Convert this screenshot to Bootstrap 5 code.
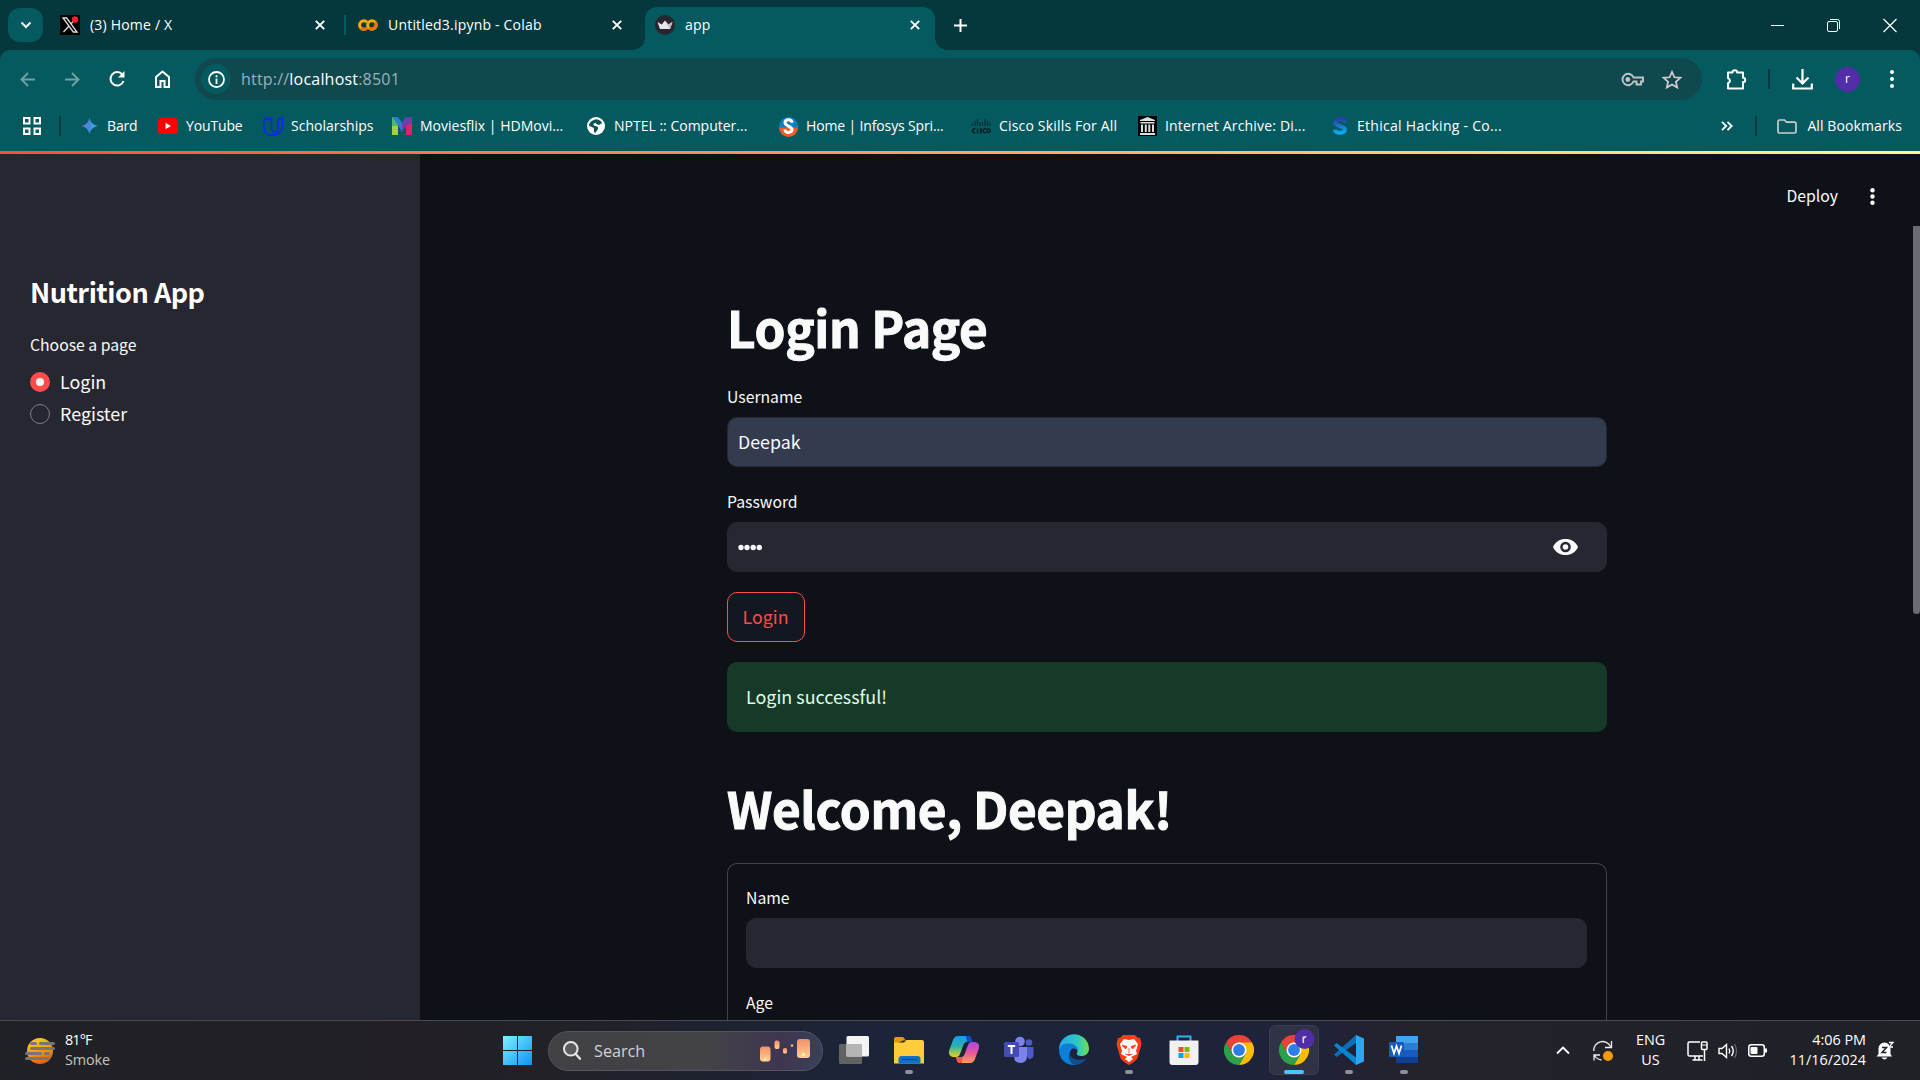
<!DOCTYPE html>
<html lang="en" data-bs-theme="dark">
<head>
<meta charset="utf-8">
<title>app</title>
<link href="https://cdn.jsdelivr.net/npm/bootstrap@5.3.0/dist/css/bootstrap.min.css" rel="stylesheet">
<script src="https://cdn.jsdelivr.net/npm/bootstrap@5.3.0/dist/js/bootstrap.bundle.min.js"></script>
<style>
body{width:1920px;height:1080px;overflow:hidden;background:#0e1117;color:#fff;font-family:"Open Sans","Noto Sans",sans-serif;font-size:14px;line-height:20px}
svg{display:block;flex:none;overflow:visible}
.t{white-space:nowrap}
.slot{flex:none;display:flex;align-items:center}
/* browser chrome */
.strip{height:50px;background:#04383d}
.tabsearch{width:35px;height:34px;margin:8px 0 0 8px;border-radius:12px;background:#055a60}
.btab{height:50px;color:#fff;position:relative}
.btab .t{margin-left:10px;letter-spacing:.2px}
.btab .x{margin-left:auto}
.tab-a{width:265px;margin-left:17px;margin-right:19px}
.tab-b{width:264px;margin-left:12px}
.active-tab{width:290px;height:43px;margin:7px 0 0 23px;padding:0 15px 7px 10px;background:#055a60;border-radius:12px 12px 0 0}
.active-tab::before,.active-tab::after{content:"";position:absolute;bottom:0;width:12px;height:12px}
.active-tab::before{left:-12px;background:radial-gradient(circle at 0 0,transparent 11.5px,#055a60 12px)}
.active-tab::after{right:-12px;background:radial-gradient(circle at 100% 0,transparent 11.5px,#055a60 12px)}
.newtab{margin-left:19px}
.winctl{gap:43px;padding-right:23px}
.vsep{width:2px;height:20px;flex:none;background:#055a60}
.vsep.dk{background:#04383d}
.toolbox{height:101px;background:#055a60;border-radius:10px 10px 0 0}
.stripbg{background:#04383d}
.toolrow{height:58px}
.omni{width:1507px;height:42px;border-radius:21px;background:#0f484e;font-size:16px;margin-left:25px}
.omni .t{margin-left:10px;letter-spacing:.2px}
.omni .chip{width:30px;height:30px;border-radius:50%;background:#055a60;margin-left:6px}
.omni .dim{color:#9cb3b5}
.avatar{width:25px;height:25px;border-radius:50%;background:#512da8;font-size:12px;line-height:24px;text-align:center}
.bmrow{height:36px}
.bmrow .t{position:relative;top:-.5px}
.bm{flex:none;display:flex;align-items:center}
.bm svg{margin-right:8px}
.ls-w{letter-spacing:.18px}
.ls-x{letter-spacing:.28px}
.ls-n{letter-spacing:-.14px}
/* application */
.viewport-box{height:869px;font-family:"Noto Sans CJK SC","Noto Sans",sans-serif;color:#fafafa}
.rainbow{left:0;top:0;width:1920px;height:3px;background:linear-gradient(90deg,#ff4b4b,#fffd80)}
.side{width:420px;background:#262730;padding:123px 30px 0}
.side h2{font-size:27px;line-height:36px;font-weight:700;margin:0 0 22px;letter-spacing:-.48px}
.lbl{font-size:15.75px;line-height:26px;display:block}
.opt{height:26px;font-size:17.9px;margin-top:11px}
.opt+.opt{margin-top:6px}
.opt .t{padding-bottom:2px}
.rad{width:20px;height:20px;border-radius:50%;border:1px solid #7d7e86;margin-right:10px}
.rad.on{border:6px solid #ff4b4b;background:#f4f4f4}
.mainpane{padding:143px 313px 0 307px;overflow:hidden}
.mainpane h1{font-size:49.5px;line-height:66px;font-weight:700;margin:0 0 24px;letter-spacing:-.35px;color:#fafafa;-webkit-text-stroke:1px #fafafa}
.fld{height:50px;border-radius:10px;border:1px solid #262730;background:#262730;margin-top:7px;padding:0 11px 2px 10px;font-size:17.8px;color:#fafafa}
.fld.filled{background:#333b4f}
.loginbtn{width:78px;height:50px;border:1px solid #ff4b4b!important;border-radius:10px;background:#131720;color:#ff4b4b;font-size:17.8px;padding:0 1px 2px 0;margin-top:20px}
.okbox{height:70px;border:0;border-radius:10px;background:#173928;color:#dffde9;font-size:17.9px;padding:0 19px 2px;margin:20px 0 0}
.mainpane h1.welcome{margin:43px 0 22px}
.formbox{border:1px solid #41444c;border-radius:10px 10px 0 0;border-bottom:0;height:180px;padding:21px 19px 0 18px}
.g21{margin-top:22px}
.eye{margin:1px 17px 0 0}
.dots{margin-top:2px}
.deploy{right:45px;top:34px;font-size:15.75px;line-height:22px}
.thumb{right:0;top:75px;width:7px;height:388px;background:#6b6b70;border-radius:0 0 4px 4px}
/* taskbar */
.task{height:60px;border-top:1px solid #494b50;background:linear-gradient(90deg,#202126 0,#222026 22%,#222127 28%,#1b2438 45%,#1c233a 60%,#20223a 68%,#24222a 74%,#22222b 80%,#1f2127 100%);font-size:14.4px}
.sbox{width:275px;height:40px;border-radius:20px;background:linear-gradient(90deg,#414145,#424247 60%,#403551 85%,#37415a);border:1px solid #55565c;color:#d2d2d5;font-size:16.2px;padding-left:14px}
.app{width:55px;height:50px;flex:none;display:flex;justify-content:center;position:relative;padding-top:10px}
.app.run::after{content:"";position:absolute;bottom:1px;width:8px;height:4px;border-radius:2px;background:#8d9098}
.app.now::before{content:"";position:absolute;left:2px;top:0;width:50px;height:50px;border-radius:6px;background:#2f3345;border:1px solid #393d4c}
.app.run.now::after{width:20px;background:#4cc2ff}
.app.now svg{position:relative}
.apps{margin:4px 0 0 3.5px}
.two{line-height:20px;padding-bottom:2px}
.weather{width:478px;padding-left:25px}
.weather .two{margin-left:10px}
.deg{letter-spacing:-.9px}
.smoke{color:#c4c5c7;letter-spacing:-.1px}
.tray{width:365px}
</style>
</head>
<body class="d-flex flex-column">
<svg width="0" height="0" class="position-absolute">
<defs>
<symbol id="cls" viewBox="0 0 10 10"><path d="M.8.8l8.4 8.400M9.200.8L.8 9.200" stroke="#fff" stroke-width="1.900"/></symbol>
<symbol id="chr" viewBox="0 0 48 48"><path d="M24 24L3.200 12A24 24 0 0 1 44.800 12Z" fill="#ea4335"/><path d="M44.800 12A24 24 0 0 1 24 48L34.400 30 24 12Z" fill="#fbbc04"/><path d="M3.200 12L13.600 30 24 24V12Z" fill="#ea4335"/><path d="M3.200 12A24 24 0 0 0 24 48L34.400 30 24 24 13.600 30Z" fill="#2da04c"/><circle cx="24" cy="24" r="12" fill="#fff"/><circle cx="24" cy="24" r="9.500" fill="#2f7de9"/></symbol>
</defs>
</svg>

<header>
<div class="strip d-flex">
  <div class="tabsearch d-flex align-items-center justify-content-center"><svg width="12" height="8" viewBox="0 0 12 8"><path d="M1.500 1.500L6 6l4.500-4.500" fill="none" stroke="#fff" stroke-width="2"/></svg></div>
  <div class="btab tab-a d-flex align-items-center">
    <svg width="20" height="20" viewBox="0 0 20 20"><rect width="20" height="20" fill="#000"/><path d="M3 3h3.700L17 17h-3.700zM16 3l-5 5.800M8.800 11.300L3.500 17" fill="none" stroke="#ddd" stroke-width="1.300"/><circle cx="15" cy="4.500" r="3.200" fill="#f4212e"/></svg>
    <span class="t">(3) Home / X</span><svg class="x" width="10" height="10"><use href="#cls"/></svg>
  </div>
  <div class="vsep align-self-center"></div>
  <div class="btab tab-b d-flex align-items-center">
    <svg width="20" height="12" viewBox="0 0 20 12"><circle cx="14" cy="6" r="4.300" fill="none" stroke="#f9ab00" stroke-width="3"/><path d="M9 3.100A4.300 4.300 0 1 0 9 9" fill="none" stroke="#f9ab00" stroke-width="3"/><path d="M11 9a4.300 4.300 0 0 0 6-6M3 9A4.300 4.300 0 0 0 9 9" fill="none" stroke="#e8710a" stroke-width="3"/></svg>
    <span class="t">Untitled3.ipynb - Colab</span><svg class="x" width="10" height="10"><use href="#cls"/></svg>
  </div>
  <div class="btab active-tab d-flex align-items-center">
    <svg width="20" height="20" viewBox="0 0 20 20"><circle cx="10" cy="10" r="10" fill="#262730"/><path d="M2.500 7l4.300 2.400L10 5.500l3.200 3.900L17.500 7 15 14H5z" fill="#e8e8e8"/><path d="M10 5.500l3.200 3.900L17.500 7 15 14z" fill="#bdbdbd"/></svg>
    <span class="t">app</span><svg class="x" width="10" height="10"><use href="#cls"/></svg>
  </div>
  <svg class="newtab align-self-center" width="13" height="13" viewBox="0 0 13 13"><path d="M6.500 0v13M0 6.500h13" stroke="#fff" stroke-width="2"/></svg>
  <div class="winctl ms-auto d-flex align-items-center">
    <svg width="13" height="13"><path d="M0 6.500h13" stroke="#fff"/></svg>
    <svg width="13" height="13" viewBox="0 0 13 13"><rect x=".5" y="2.500" width="10" height="10" rx="1.500" fill="none" stroke="#fff"/><path d="M3 .5h7.500a2 2 0 0 1 2 2V10" fill="none" stroke="#fff"/></svg>
    <svg width="14" height="13" viewBox="0 0 14 13"><path d="M.5 0l13 13M13.500 0L.5 13" stroke="#fff" stroke-width="1.200"/></svg>
  </div>
</div>
<div class="stripbg"><div class="toolbox">
  <div class="toolrow d-flex align-items-center">
    <svg style="margin-left:20px" width="15" height="15" viewBox="0 0 15 15"><path d="M15 7.500H1.500M8 1L1.500 7.500 8 14" fill="none" stroke="#6fa0a4" stroke-width="1.900"/></svg>
    <svg style="margin-left:30px" width="15" height="15" viewBox="0 0 15 15"><path d="M0 7.500h13.500M7 1l6.500 6.500L7 14" fill="none" stroke="#6fa0a4" stroke-width="1.900"/></svg>
    <svg style="margin-left:29px" width="16" height="16" viewBox="0 0 16 16"><path d="M13.300 3.500A6.700 6.700 0 1 0 14.500 10" fill="none" stroke="#fff" stroke-width="2"/><path d="M15.500 0v6.500H9z" fill="#fff"/></svg>
    <svg style="margin-left:30px" width="15" height="18" viewBox="0 0 15 18"><path d="M1 7l6.500-5.500L14 7v10H9.500v-6h-4v6H1z" fill="none" stroke="#fff" stroke-width="2"/></svg>
    <div class="omni d-flex align-items-center">
      <div class="chip d-flex align-items-center justify-content-center"><svg width="17" height="17" viewBox="0 0 17 17"><circle cx="8.500" cy="8.500" r="7.500" fill="none" stroke="#fff" stroke-width="1.800"/><path d="M8.500 7.500V13M8.500 4.200v2" stroke="#fff" stroke-width="1.800"/></svg></div>
      <span class="t dim">http://<span class="text-white">localhost</span>:8501</span>
      <svg class="ms-auto" width="23" height="13" viewBox="0 0 23 13"><path d="M12.500 4.500A5.700 5.700 0 1 0 12.500 8.500H15.500V11.500H20V8.500H22V4.500z" fill="none" stroke="#c0c4c6" stroke-width="1.900"/><circle cx="6.800" cy="6.500" r="2.400" fill="#c0c4c6"/></svg>
      <svg style="margin:0 20px 0 18px" width="20" height="19" viewBox="0 0 20 19"><path d="M10 1.800l2.400 5.500 6 .5-4.500 4 1.300 5.800L10 14.500l-5.200 3.100 1.300-5.800-4.500-4 6-.5z" fill="none" stroke="#d5cfd0" stroke-width="1.700"/></svg>
    </div>
    <svg style="margin-left:24px" width="21" height="21" viewBox="0 0 21 21"><path d="M2 3.500h4.500a2.300 2.300 0 0 1 4.600 0H17v5.200a2.200 2.200 0 0 1 0 4.400V19.500H2v-5.200a2.600 2.600 0 0 0 0-5z" fill="none" stroke="#fff" stroke-width="2" stroke-linejoin="round"/></svg>
    <div class="vsep dk" style="margin-left:21px"></div>
    <svg style="margin-left:22px" width="21" height="21" viewBox="0 0 21 21"><path d="M10.500 0v14M4.500 8.500l6 6 6-6M1.200 14.500v5h18.600v-5" fill="none" stroke="#fff" stroke-width="2.200"/></svg>
    <div class="avatar" style="margin-left:22px">r</div>
    <svg style="margin-left:30px" width="4" height="18" viewBox="0 0 4 18"><g fill="#fff"><circle cx="2" cy="2" r="2"/><circle cx="2" cy="9" r="2"/><circle cx="2" cy="16" r="2"/></g></svg>
  </div>
  <div class="bmrow d-flex align-items-center">
    <svg style="margin-left:23px" width="18" height="18" viewBox="0 0 18 18"><path d="M1 1h5.500v5.500H1zM11.500 1H17v5.500h-5.500zM1 11.500h5.500V17H1zM11.500 11.500H17V17h-5.500z" fill="none" stroke="#fff" stroke-width="2"/></svg>
    <div class="vsep dk" style="margin:0 20px 0 18px"></div>
    <div class="bm" style="width:77px"><svg style="margin-right:9px" width="17" height="16" viewBox="0 0 16 16"><defs><linearGradient id="bg1"><stop stop-color="#8b6fc4"/><stop offset=".5" stop-color="#3f8ce0"/><stop offset="1" stop-color="#4fb5f5"/></linearGradient></defs><path d="M8 0q1.400 6.600 8 8-6.600 1.400-8 8-1.400-6.600-8-8 6.600-1.400 8-8" fill="url(#bg1)"/></svg><span class="t ls-n">Bard</span></div>
    <div class="bm" style="width:105px"><svg width="20" height="16" viewBox="0 0 20 16"><rect width="20" height="16" rx="3.500" fill="#f00"/><path d="M7.500 4.800l5.500 3.200-5.500 3.200z" fill="#fff"/></svg><span class="t ls-n">YouTube</span></div>
    <div class="bm" style="width:129px"><svg width="20" height="19" viewBox="0 0 20 19"><path d="M4.500 1L1 3v8a7 7 0 0 0 7 7.300c5 0 11.300-2.500 11.300-8V.700L15 3v8c0 2.500-1.300 4-2.800 4S8.500 14 8.500 11V1L4.500 3z" fill="none" stroke="#1321ff" stroke-width="1.500"/></svg><span class="t">Scholarships</span></div>
    <div class="bm" style="width:195px"><svg width="20" height="18" viewBox="0 0 20 18"><path d="M0 0h6v18H0z" fill="#4fb96a"/><path d="M0 9h6v9H0z" fill="#a8cf3c"/><path d="M0 0h6l4 6 4-6v8l-4 7-4-7z" fill="#2c7fd0"/><path d="M14 0h6v18h-6z" fill="#e0226e"/><path d="M10 6l4-6h6v6l-6 3-4 6z" fill="#6a3fa8"/></svg><span class="t">Moviesflix | HDMovi...</span></div>
    <div class="bm" style="width:192px"><svg style="margin-right:9px" width="18" height="18" viewBox="0 0 18 18"><circle cx="9" cy="9" r="9" fill="#fff"/><path d="M9 2.200c2 0 5 1 6 4-2 .5-2 2-4 1.500S9 5 7 6.500s1 2.500 3 3 1 3-1 5.500-2-1-2-3-3-2-5-3c0-3 3-6 7-6.800" fill="#0b5257"/></svg><span class="t">NPTEL :: Computer...</span></div>
    <div class="bm" style="width:192px"><svg style="margin-right:8px" width="19" height="19" viewBox="0 0 19 19"><circle cx="9.500" cy="9.500" r="9.500" fill="#0a7fc4"/><path d="M0 10.500h19a9.500 9.500 0 0 1-19 0" fill="#f05a28"/><path d="M13 5.800c0-4-7-4-7 0 0 3.500 7 3 7 6.800s-7 4-7 0" fill="none" stroke="#fff" stroke-width="3"/></svg><span class="t ls-n">Home | Infosys Spri...</span></div>
    <div class="bm" style="width:167px"><svg width="20" height="15" viewBox="0 0 20 15"><path d="M1 4v3M4 2v5M6.500 0v7M9 3v4M11.500 3v4M14 0v7M16.500 2v5M19 4v3" stroke="#063035" stroke-width="1.200"/><path d="M4.500 10a2 2 0 1 0 0 3.500M6.500 9.500V14M11 10H9.500q-1 1 .3 1.700t-.3 2H8.500M15 10a2 2 0 1 0 0 3.500" fill="none" stroke="#0a1c1f" stroke-width="1.400"/><circle cx="17.500" cy="11.800" r="1.800" fill="none" stroke="#0a1c1f" stroke-width="1.300"/></svg><span class="t ls-w">Cisco Skills For All</span></div>
    <div class="bm" style="width:195px"><svg width="19" height="20" viewBox="0 0 19 20"><path fill="#000" d="M0 0h19v20H0z"/><path fill="#ddd" d="M2 4l7.500-3L17 4v1H2zM2.500 6h14v1.500h-14zM3 8.500h2V16H3zM6.800 8.500h2V16h-2zM10.300 8.500h2V16h-2zM14 8.500h2V16h-2zM2 17h15v2H2z"/></svg><span class="t ls-w">Internet Archive: Di...</span></div>
    <div class="bm"><svg style="margin-right:10px" width="14" height="18" viewBox="0 0 14 18"><defs><linearGradient id="eh" x2="0" y2="1"><stop stop-color="#2a3fa8"/><stop offset="1" stop-color="#06aef5"/></linearGradient></defs><path d="M12 5.500c0-4.500-9.500-4.500-9.500 0S12 8.500 12 12.500s-10 4.500-10 0" fill="none" stroke="url(#eh)" stroke-width="4"/></svg><span class="t ls-x">Ethical Hacking - Co...</span></div>
    <div class="ms-auto d-flex align-items-center" style="padding-right:18px">
      <svg width="12" height="10" viewBox="0 0 12 10"><path d="M1 .8L5.200 5 1 9.200M6.500.8L10.700 5 6.500 9.200" fill="none" stroke="#fff" stroke-width="1.800"/></svg>
      <div class="vsep dk" style="margin:0 20px 0 22px"></div>
      <svg style="margin-right:10px" width="20" height="15" viewBox="0 0 20 15"><path d="M1 2.500Q1 1 2.500 1H7.500l2 2.200h8q1.500 0 1.500 1.500V12.500q0 1.500-1.500 1.500h-15Q1 14 1 12.500z" fill="none" stroke="#c8cfd0" stroke-width="1.700"/></svg>
      <span class="t" style="letter-spacing:.1px">All Bookmarks</span>
    </div>
  </div>
</div></div>
</header>

<div class="viewport-box d-flex position-relative">
  <div class="rainbow position-absolute"></div>
  <aside class="side flex-shrink-0">
    <h2 class="t">Nutrition App</h2>
    <span class="lbl t">Choose a page</span>
    <div class="opt d-flex align-items-center"><span class="rad on"></span><span class="t">Login</span></div>
    <div class="opt d-flex align-items-center"><span class="rad"></span><span class="t">Register</span></div>
  </aside>
  <main class="mainpane flex-grow-1">
    <h1 class="t">Login Page</h1>
    <label class="lbl">Username</label>
    <div class="fld filled d-flex align-items-center">Deepak</div>
    <label class="lbl g21">Password</label>
    <div class="fld d-flex align-items-center"><svg class="dots" width="24" height="6" viewBox="0 0 24 6"><g fill="#fafafa"><circle cx="3" cy="3.500" r="2.700"/><circle cx="9" cy="3.500" r="2.700"/><circle cx="15.200" cy="3.500" r="2.700"/><circle cx="21.300" cy="3.500" r="2.700"/></g></svg>
      <svg class="eye ms-auto" width="25" height="16" viewBox="0 0 25 16"><path d="M0 8C2.500 2.500 7 0 12.500 0S22.500 2.500 25 8c-2.500 5.500-7 8-12.500 8S2.500 13.500 0 8" fill="#fafafa"/><circle cx="12.500" cy="8" r="5.300" fill="#262730"/><circle cx="12.500" cy="8" r="2.800" fill="#fafafa"/></svg></div>
    <button class="btn loginbtn d-block">Login</button>
    <div class="alert okbox d-flex align-items-center">Login successful!</div>
    <h1 class="t welcome">Welcome, Deepak!</h1>
    <div class="formbox">
      <label class="lbl">Name</label>
      <div class="fld"></div>
      <label class="lbl g21">Age</label>
    </div>
  </main>
  <div class="deploy position-absolute d-flex align-items-center"><span class="t">Deploy</span><svg style="margin-left:32px" width="5" height="17" viewBox="0 0 5 17"><g fill="#fafafa"><circle cx="2.500" cy="2.300" r="2.200"/><circle cx="2.500" cy="8.500" r="2.200"/><circle cx="2.500" cy="14.700" r="2.200"/></g></svg></div>
  <div class="thumb position-absolute"></div>
</div>

<footer class="task d-flex">
  <div class="slot weather">
    <svg width="30" height="26" viewBox="0 0 30 26"><defs><linearGradient id="sun" x1=".2" y1="0" x2=".6" y2="1"><stop stop-color="#fcd116"/><stop offset=".5" stop-color="#f59e0b"/><stop offset="1" stop-color="#e8590c"/></linearGradient></defs><circle cx="15" cy="13" r="13" fill="url(#sun)"/><path d="M6.500 5.500h4M15.500 5.500h13M6.500 10.500h22M1.500 15.500h14M20.500 15.500h3M1.500 20.500h22" stroke="#74767a" stroke-width="3" stroke-linecap="round"/></svg>
    <div class="two"><span class="t deg">81°F</span><br><span class="smoke">Smoke</span></div>
  </div>
  <div class="slot">
    <svg style="margin:0 16px 0 25px" width="29" height="29" viewBox="0 0 29 29"><defs><linearGradient id="wn" x2="1" y2="1"><stop stop-color="#7ff0ff"/><stop offset="1" stop-color="#0b94f5"/></linearGradient></defs><path d="M0 0h14v14H0zM15 0h14v14H15zM0 15h14v14H0zM15 15h14v14H15z" fill="url(#wn)"/></svg>
    <div class="sbox d-flex align-items-center">
      <svg width="18" height="19" viewBox="0 0 18 19"><circle cx="7.800" cy="7.800" r="6.800" fill="#5a5a5e" stroke="#e6e6e6" stroke-width="2"/><path d="M12.500 12.800l4.500 5" stroke="#e6e6e6" stroke-width="2.300" stroke-linecap="round"/></svg>
      <span class="t" style="margin-left:13px">Search</span>
      <svg class="ms-auto" style="margin-right:12px" width="50" height="24" viewBox="0 0 50 24"><defs><linearGradient id="ln" x2="0" y2="1"><stop stop-color="#f0906c"/><stop offset="1" stop-color="#ffd18c"/></linearGradient></defs><g fill="url(#ln)"><rect y="7.500" width="10.500" height="15" rx="3"/><rect x="14.500" y="1.500" width="5" height="8.500" rx="2"/><rect x="23" y="9" width="4" height="5.500" rx="1.500"/><circle cx="32" cy="6.500" r="1.300"/><rect x="37" y="0" width="13" height="19" rx="3"/></g><circle cx="5" cy="20" r="1.500" fill="#fff0b0"/><circle cx="43.500" cy="15.500" r="1.800" fill="#fff0b0"/></svg>
    </div>
  </div>
  <div class="apps d-flex">
    <div class="app"><svg width="30" height="30" viewBox="0 0 30 30"><rect x="0" y="9" width="23" height="20" rx="1.500" fill="#626262"/><rect x="7.500" y="1" width="22.500" height="20.500" rx="1.500" fill="#f4f4f4"/><path d="M7.500 9H23v12.500H7.500z" fill="#b5b5b5"/></svg></div>
    <div class="app run"><svg width="30" height="30" viewBox="0 0 30 30"><path d="M0 4q0-2 2-2h7l3 3.500h-3L0 10z" fill="#e09c00"/><path d="M0 7.500h10L12.500 5H28q2 0 2 2v21.500H0z" fill="#ffcd3c"/><path d="M5 28.500V24q0-3 3-3h23-9q4 0 4-0H31 24q3 0 3 3v4.500z" fill="none"/><path d="M5 28.500V24q0-3 3-3h16q3 0 3 3v4.500z" transform="translate(-.5)" fill="#0b74c9"/><path d="M8 24.500h15" stroke="#054b88" stroke-width="1.300"/></svg></div>
    <div class="app"><svg width="30" height="30" viewBox="0 0 30 30"><defs><linearGradient id="c1" x2="0" y2="1"><stop stop-color="#159be8"/><stop offset=".5" stop-color="#2bb5a8"/><stop offset="1" stop-color="#f2cf1d"/></linearGradient><linearGradient id="c2" x2="0" y2="1"><stop stop-color="#a44be0"/><stop offset=".5" stop-color="#e8559e"/><stop offset="1" stop-color="#ff9d57"/></linearGradient></defs><path d="M20 1q2 .5 3 6h-5q-3 0-4 4l-3 8q-1 3-4 3H4q-5-1-4-6L4 5q1.500-4 5-4z" fill="url(#c1)"/><path d="M17 1h3q2.500.5 3.500 6H18z" fill="#1648c8"/><path d="M10 28q-2-.5-3-6h5q3 0 4-4l3-8q1-3 4-3h3q5 1 4 6l-4 11q-1.500 4-5 4z" fill="url(#c2)"/><path d="M10 28q-2-1-3-6h6.500L13 28z" fill="#f0584a"/></svg></div>
    <div class="app"><svg width="30" height="30" viewBox="0 0 30 30"><circle cx="16" cy="6.500" r="4.800" fill="#7b83eb"/><circle cx="25" cy="7.500" r="3.300" fill="#5059c9"/><path d="M19 12h10.500v8q0 4-5 4z" fill="#5059c9"/><path d="M10 12h13v9q0 7-6.500 7T10 21z" fill="#7b83eb"/><rect x="0" y="7" width="15" height="15" rx="1.500" fill="#444bb2"/><path d="M3.800 11h7.400M7.500 11v8" stroke="#fff" stroke-width="2"/></svg></div>
    <div class="app"><svg width="30" height="30" viewBox="0 0 30 30"><defs><linearGradient id="e1" x2="1"><stop stop-color="#24a9ea"/><stop offset=".6" stop-color="#2fc6c8"/><stop offset="1" stop-color="#6fe04e"/></linearGradient></defs><path d="M0 15A15 15 0 0 1 30 13.500c0 5-3.500 7.500-7.500 7.500-3 0-5.500-1-4.500-3 1.500-2.500 0-7.500-6-7.500C6 10.500 1 12.500 0 15" fill="url(#e1)"/><path d="M0 15C1 9.500 6 8 11 8.500c5 .5 8.500 4 8 8-1.500-3-5-4-7-1.500-3 4-1 12 5 14.800C7 31 0 24 0 15" fill="#0c7fd8"/><path d="M10.500 18c1 5.500 8 9 17 5.500Q23 30 16 30c-5-1.500-7.500-7-5.500-12" fill="#114f93"/></svg></div>
    <div class="app run"><svg width="26" height="30" viewBox="0 0 26 30"><path d="M7 0h12l2.500 2.500L24 3l1.500 5.500L25 11l-3.500 12q-1 2.500-8.500 7-7.500-4.500-8.500-7L1 11 .5 8.500 2 3l2.500-.5z" fill="#fb3c14"/><path d="M13 5l5-1 4 5-2 7 1 3-6 3 2 2-4 3-4-3 2-2-6-3 1-3-2-7 4-5z" fill="#fff"/><path d="M6 10l5 1.500-1.500 2.500zM20 10l-5 1.500 1.500 2.500zM13 13v5.500M9.500 19l3.500 1.500 3.500-1.500" fill="#fb3c14" stroke="#fb3c14" stroke-width=".8"/></svg></div>
    <div class="app"><svg width="30" height="30" viewBox="0 0 30 30"><path d="M8.500 7V1.500h13V7" fill="none" stroke="#2fb3ec" stroke-width="2"/><path d="M.5 5.500h29V27q0 3-3 3h-23q-3 0-3-3z" fill="#f1f1f1"/><path fill="#f25022" d="M9.500 12h5v5h-5z"/><path fill="#7fba00" d="M15.500 12h5v5h-5z"/><path fill="#00a4ef" d="M9.500 18h5v5h-5z"/><path fill="#ffb900" d="M15.500 18h5v5h-5z"/></svg></div>
    <div class="app"><svg width="30" height="30"><use href="#chr"/></svg></div>
    <div class="app run now"><svg width="30" height="30" viewBox="0 0 30 30"><use href="#chr" width="30" height="30"/><circle cx="25.500" cy="4" r="10" fill="#512da8"/><path d="M24.300 8V1.500M24.300 4q.5-2.500 3-2.200" fill="none" stroke="#ddd" stroke-width="1.500"/></svg></div>
    <div class="app run"><svg width="30" height="30" viewBox="0 0 30 30"><path d="M0 19.500L2.500 22 22 8V0z" fill="#0b6fb8"/><path d="M0 10.500L2.500 8 22 22.500V30z" fill="#0a84d0"/><path d="M22 0l8 3.500v23L22 30z" fill="#2aa7f0"/></svg></div>
    <div class="app run"><svg width="30" height="30" viewBox="0 0 30 30"><path fill="#41a5ee" d="M7 1h22v7H7z"/><path fill="#2b7cd3" d="M7 8h22v7H7z"/><path fill="#185abd" d="M7 15h22v7H7z"/><path fill="#103f91" d="M7 22h22v6H7z"/><rect y="7" width="15" height="15" rx="1.300" fill="#185abd"/><path d="M2.500 10.500l2.500 8 2.500-7.500 2.500 7.500 2.500-8" fill="none" stroke="#fff" stroke-width="1.700"/></svg></div>
  </div>
  <div class="slot tray ms-auto">
    <svg style="margin-left:1px" width="14" height="9" viewBox="0 0 14 9"><path d="M1 7.500l6-6 6 6" fill="none" stroke="#fff" stroke-width="1.800"/></svg>
    <svg style="margin-left:23px" width="20" height="20" viewBox="0 0 20 20"><path d="M.8 10A8.800 8.800 0 0 1 17.500 5.500M18.500 0v6.500H12M1 19.500V14h6M1.500 14.500q2.500 4 7 4.500" fill="none" stroke="#eee" stroke-width="1.300"/><circle cx="15" cy="15" r="5" fill="#ff9a0c"/></svg>
    <div class="two text-center" style="margin-left:23px;width:29px;padding-bottom:1px">ENG<br>US</div>
    <svg style="margin-left:22px" width="21" height="20" viewBox="0 0 21 20"><path d="M13 1H2.500Q1 1 1 2.500v11Q1 15 2.500 15H16M5.500 19h10M8 15v4M12 15v4M17.500 9v11" fill="none" stroke="#fff" stroke-width="1.500"/><rect x="14.500" y="1" width="5.500" height="7.500" rx="1" fill="none" stroke="#fff" stroke-width="1.500"/><path d="M14.500 4h5.500" stroke="#fff"/></svg>
    <svg style="margin-left:10px" width="20" height="16" viewBox="0 0 20 16"><path d="M1 5.500h3L8.500 1.500v13L4 10.500H1z" fill="none" stroke="#fff" stroke-width="1.400"/><path d="M11 5.500q1.500 2.500 0 5M13.500 3q3.500 5 0 10" fill="none" stroke="#fff" stroke-width="1.400"/><path d="M16.500 1q4 7 0 14" fill="none" stroke="#666" stroke-width="1.300"/></svg>
    <svg style="margin-left:10px" width="20" height="13" viewBox="0 0 20 13"><rect x=".8" y=".8" width="15.500" height="11.400" rx="2.500" fill="none" stroke="#fff" stroke-width="1.500"/><rect x="2.500" y="3" width="7" height="7" rx="1" fill="#fff"/><path d="M18 4.500v4" stroke="#fff" stroke-width="2"/></svg>
    <div class="two text-end" style="margin-left:18px;width:80px"><span class="t">4:06 PM</span><br>11/16/2024</div>
    <svg style="margin-left:10px" width="18" height="19" viewBox="0 0 18 19"><path d="M2.500 13V7.500a6 6 0 0 1 12 0V13l1.500 2.500H.5z" fill="#fff"/><path d="M5.500 16.500h6q-3 4-6 0" fill="#fff"/><path d="M11.500 0H18v7h-4z" fill="#212228"/><path d="M13 1.500h4l-4 4.500h4" fill="none" stroke="#fff" stroke-width="1.300"/><path d="M6 6.500h4.500L6 11.500h4.500" fill="none" stroke="#212228" stroke-width="1.500"/></svg>
  </div>
</footer>
</body>
</html>
